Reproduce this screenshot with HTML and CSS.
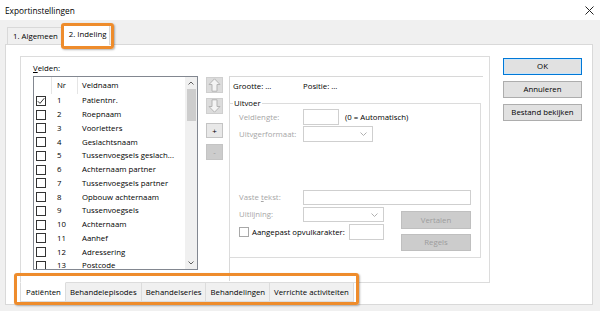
FILE: index.html
```html
<!DOCTYPE html>
<html>

<head>
    <meta charset="utf-8">
    <title>Exportinstellingen</title>
    <link rel="stylesheet" href="styles.css">
</head>

<body>
    <div class="dialog">
        <div class="titlebar">
            <span class="title">Exportinstellingen</span>
            <svg class="close" width="9" height="9" viewBox="0 0 9 9">
                <path d="M0.5 0.5 L8.5 8.5 M8.5 0.5 L0.5 8.5" stroke="#222" stroke-width="1" fill="none" />
            </svg>
        </div>

        <div class="tabstrip">
            <div class="tab">1. Algemeen</div>
            <div class="tab tab-active marked-top">2. Indeling</div>
        </div>

        <div class="page">
            <div class="main">
                <div class="fields">
                    <div class="fields-label"><u>V</u>elden:</div>
                    <div class="fields-row">

                        <div class="listbox">
                            <div class="list-body">
                                <div class="list-head">
                                    <span class="col-check"></span>
                                    <span class="col-nr">Nr</span>
                                    <span class="col-name">Veldnaam</span>
                                </div>
                                <div class="list-row">
                                    <span class="col-check"><span class="check">
                                        <svg width="8" height="8" viewBox="0 0 8 8"><path d="M0.8 4.2 L3 6.4 L7.3 1.2" stroke="#333" stroke-width="1" fill="none" /></svg>
                                    </span></span>
                                    <span class="col-nr">1</span>
                                    <span class="col-name">Patientnr.</span>
                                </div>
                                <div class="list-row"><span class="col-check"><span class="check"></span></span><span class="col-nr">2</span><span class="col-name">Roepnaam</span></div>
                                <div class="list-row"><span class="col-check"><span class="check"></span></span><span class="col-nr">3</span><span class="col-name">Voorletters</span></div>
                                <div class="list-row"><span class="col-check"><span class="check"></span></span><span class="col-nr">4</span><span class="col-name">Geslachtsnaam</span></div>
                                <div class="list-row"><span class="col-check"><span class="check"></span></span><span class="col-nr">5</span><span class="col-name">Tussenvoegsels geslach...</span></div>
                                <div class="list-row"><span class="col-check"><span class="check"></span></span><span class="col-nr">6</span><span class="col-name">Achternaam partner</span></div>
                                <div class="list-row"><span class="col-check"><span class="check"></span></span><span class="col-nr">7</span><span class="col-name">Tussenvoegsels partner</span></div>
                                <div class="list-row"><span class="col-check"><span class="check"></span></span><span class="col-nr">8</span><span class="col-name">Opbouw achternaam</span></div>
                                <div class="list-row"><span class="col-check"><span class="check"></span></span><span class="col-nr">9</span><span class="col-name">Tussenvoegsels</span></div>
                                <div class="list-row"><span class="col-check"><span class="check"></span></span><span class="col-nr">10</span><span class="col-name">Achternaam</span></div>
                                <div class="list-row"><span class="col-check"><span class="check"></span></span><span class="col-nr">11</span><span class="col-name">Aanhef</span></div>
                                <div class="list-row"><span class="col-check"><span class="check"></span></span><span class="col-nr">12</span><span class="col-name">Adressering</span></div>
                                <div class="list-row"><span class="col-check"><span class="check"></span></span><span class="col-nr">13</span><span class="col-name">Postcode</span></div>
                            </div>
                            <div class="scrollbar">
                                <svg class="sb-arrow" width="12" height="12" viewBox="0 0 12 12"><path d="M3.5 7.5 L6 5 L8.5 7.5" stroke="#606060" stroke-width="1" fill="none" /></svg>
                                <div class="sb-thumb"></div>
                                <div class="sb-track"></div>
                                <svg class="sb-arrow" width="12" height="12" viewBox="0 0 12 12"><path d="M3.5 4.5 L6 7 L8.5 4.5" stroke="#606060" stroke-width="1" fill="none" /></svg>
                            </div>
                        </div>

                        <div class="movers">
                            <div class="mover mover-up">
                                <svg width="13" height="14" viewBox="0 0 13 14"><path d="M6.5 0.8 L12 6.5 L9 6.5 L9 13.2 L4 13.2 L4 6.5 L1 6.5 Z" fill="#f4f4f4" stroke="#b4b4b4" stroke-width="1" /></svg>
                            </div>
                            <div class="mover mover-down">
                                <svg width="13" height="14" viewBox="0 0 13 14"><path d="M6.5 13.2 L12 7.5 L9 7.5 L9 0.8 L4 0.8 L4 7.5 L1 7.5 Z" fill="#f4f4f4" stroke="#b4b4b4" stroke-width="1" /></svg>
                            </div>
                            <div class="mover mover-add">+</div>
                            <div class="mover mover-remove">-</div>
                        </div>

                        <div class="props">
                            <div class="props-head">
                                <span class="props-size">Grootte: ...</span>
                                <span>Positie: ...</span>
                            </div>
                            <fieldset class="group">
                                <legend>Uitvoer</legend>
                                <div class="form-row">
                                    <span class="form-label">Veldlengte:</span>
                                    <span class="textbox box-length"></span>
                                    <span class="hint">(0 = Automatisch)</span>
                                </div>
                                <div class="form-row row-format">
                                    <span class="form-label">Uitvgerformaat:</span>
                                    <span class="combo box-format"><svg width="7" height="4" viewBox="0 0 7 4"><path d="M0.5 0.5 L3.5 3.5 L6.5 0.5" stroke="#b0b0b0" fill="none" /></svg></span>
                                </div>

                                <div class="form-row row-text">
                                    <span class="form-label">Vaste <u>t</u>ekst:</span>
                                    <span class="textbox box-text"></span>
                                </div>
                                <div class="lower">
                                    <div class="lower-left">
                                        <div class="form-row row-align">
                                            <span class="form-label">Uitlijning:</span>
                                            <span class="combo box-align"><svg width="7" height="4" viewBox="0 0 7 4"><path d="M0.5 0.5 L3.5 3.5 L6.5 0.5" stroke="#b0b0b0" fill="none" /></svg></span>
                                        </div>
                                        <div class="form-row row-pad">
                                            <span class="check check-light"></span>
                                            <span class="pad-label">Aangepast opvulkarakter:</span>
                                            <span class="textbox box-pad"></span>
                                        </div>
                                    </div>
                                    <div class="lower-buttons">
                                        <div class="btn-off btn-translate">Vertalen</div>
                                        <div class="btn-off btn-rules">Regels</div>
                                    </div>
                                </div>
                            </fieldset>
                        </div>

                    </div>
                </div>

                <div class="subtabs marked-bottom">
                    <div class="subtab subtab-active">Patiënten</div>
                    <div class="subtab">Behandelepisodes</div>
                    <div class="subtab">Behandelseries</div>
                    <div class="subtab">Behandelingen</div>
                    <div class="subtab">Verrichte activiteiten</div>
                </div>
            </div>

            <div class="actions">
                <div class="btn btn-default">OK</div>
                <div class="btn">Annuleren</div>
                <div class="btn">Bestand bekijken</div>
            </div>
        </div>
    </div>
</body>

</html>
```

FILE: styles.css
```css
body {
    margin: 0;
    background-color: #f0f0f0;
    font-family: "Open Sans", "Noto Sans", sans-serif;
    font-size: 7.8px;
    line-height: 11px;
    color: #000;
}

.dialog {
    width: 600px;
    height: 311px;
    display: flex;
    flex-direction: column;
    overflow: hidden;
}

/* title bar */

.titlebar {
    height: 20px;
    flex: none;
    background-color: white;
    display: flex;
    align-items: center;
    justify-content: space-between;
    padding: 0 6px 0 5px;
}

.title {
    font-size: 8.3px;
}

.close {
    margin-top: 1px;
}

/* top tabs */

.tabstrip {
    height: 24px;
    flex: none;
    display: flex;
    align-items: flex-end;
    padding-left: 7px;
}

.tab {
    height: 17px;
    box-sizing: border-box;
    padding: 3px 5px 0 5px;
    border: 1px solid #d9d9d9;
    border-bottom: none;
    background-color: #f0f0f0;
}

.tab-active {
    height: 21px;
    margin-bottom: -1px;
    padding: 4px 3px 0 5px;
    background-color: white;
    border-left: none;
    position: relative;
    z-index: 2;
}

.marked-top::after {
    content: "";
    position: absolute;
    top: -2px;
    right: -5px;
    bottom: -4px;
    left: -3px;
    border: 3px solid #ee8c2c;
    border-radius: 3px;
    box-shadow: 1px 1px 2px rgba(0, 0, 0, 0.3);
}

/* tab page */

.page {
    width: 588px;
    height: 261px;
    margin-left: 5px;
    box-sizing: border-box;
    border: 1px solid #d9d9d9;
    background-color: white;
    display: flex;
    flex: none;
}

.main {
    padding: 11px 0 0 14px;
}

.fields {
    width: 470px;
    height: 227px;
    box-sizing: border-box;
    border: 1px solid #dcdcdc;
}

.fields-label {
    padding: 6px 0 0 12px;
    height: 13px;
}

.fields-row {
    display: flex;
    margin-left: 12px;
    height: 205px;
}

/* list */

.listbox {
    width: 165px;
    height: 194px;
    box-sizing: border-box;
    border: 1px solid #828790;
    display: flex;
    overflow: hidden;
}

.list-body {
    flex: 1;
    overflow: hidden;
}

.list-head {
    height: 17px;
    display: flex;
    align-items: center;
}

.list-head .col-check,
.list-head .col-nr {
    height: 17px;
    border-right: 1px solid #e5e5e5;
}

.list-row {
    height: 13.75px;
    display: flex;
    align-items: center;
    white-space: nowrap;
}

.col-check {
    width: 18px;
    flex: none;
    box-sizing: border-box;
    display: flex;
    align-items: center;
    padding-left: 2px;
}

.col-nr {
    width: 26px;
    flex: none;
    box-sizing: border-box;
    padding-left: 5px;
    display: flex;
    align-items: center;
}

.col-name {
    padding-left: 4px;
    display: flex;
    align-items: center;
}

.check {
    width: 10px;
    height: 10px;
    box-sizing: border-box;
    border: 1px solid #333;
    background-color: white;
    display: flex;
    align-items: center;
    justify-content: center;
    flex: none;
}

.check-light {
    border-color: #a8a8a8;
}

.scrollbar {
    width: 12px;
    flex: none;
    background-color: #f0f0f0;
    display: flex;
    flex-direction: column;
}

.sb-arrow {
    flex: none;
}

.sb-thumb {
    height: 32px;
    margin: 0 1px 0 2px;
    background-color: #cdcdcd;
}

.sb-track {
    flex: 1;
}

/* move buttons */

.movers {
    width: 17px;
    margin-left: 8px;
    display: flex;
    flex-direction: column;
}

.mover {
    box-sizing: border-box;
    border: 1px solid #cfcfcf;
    display: flex;
    align-items: center;
    justify-content: center;
}

.mover-up {
    height: 16px;
    margin-top: 1px;
    background-color: #dcdcdc;
}

.mover-down {
    height: 16px;
    margin-top: 5px;
    background-color: #dcdcdc;
}

.mover-add {
    height: 15px;
    margin-top: 9px;
    background-color: #e8e8e8;
    border-color: #c4c4c4;
    font-size: 8px;
}

.mover-remove {
    height: 16px;
    margin-top: 6px;
    background-color: #cccccc;
    border-color: #c4c4c4;
    color: #9a9a9a;
}

/* properties */

.props {
    width: 254px;
    margin-left: 6px;
    box-sizing: border-box;
    border-left: 1px solid #d8d8d8;
    border-top: 1px solid #d8d8d8;
}

.props-head {
    height: 17px;
    padding: 4px 0 0 3px;
    display: flex;
}

.props-size {
    width: 70px;
}

.group {
    margin: 0 0 0 -1px;
    padding: 0;
    width: 252px;
    height: 160px;
    box-sizing: border-box;
    border: 1px solid #dcdcdc;
}

.group legend {
    padding: 0 1px;
    margin-left: 3px;
    line-height: 11px;
}

.form-row {
    display: flex;
    align-items: center;
    padding-left: 9px;
}

.form-label {
    width: 64px;
    flex: none;
    color: #a6a6a6;
}

.textbox,
.combo {
    box-sizing: border-box;
    border: 1px solid #cfcfcf;
    background-color: white;
    display: flex;
    align-items: center;
    justify-content: flex-end;
    padding-right: 5px;
}

.box-length {
    width: 36px;
    height: 16px;
}

.hint {
    margin-left: 6px;
}

.row-format {
    margin-top: 1px;
}

.box-format {
    width: 70px;
    height: 16px;
}

.row-text {
    margin-top: 48px;
}

.box-text {
    width: 168px;
    height: 15px;
}

.lower {
    display: flex;
}

.lower-left {
    width: 154px;
}

.row-align {
    margin-top: 2px;
}

.box-align {
    width: 81px;
    height: 15px;
}

.row-pad {
    margin-top: 2px;
}

.pad-label {
    margin-left: 3px;
    white-space: nowrap;
}

.box-pad {
    width: 35px;
    height: 16px;
    margin-left: auto;
}

.lower-buttons {
    margin-left: 17px;
    padding-top: 6px;
    width: 70px;
}

.btn-off {
    box-sizing: border-box;
    border: 1px solid #bfbfbf;
    background-color: #cccccc;
    color: #9c9c9c;
    display: flex;
    align-items: center;
    justify-content: center;
}

.btn-translate {
    height: 18px;
}

.btn-rules {
    height: 17px;
    margin-top: 5px;
}

/* bottom tabs */

.subtabs {
    display: flex;
    position: relative;
    margin-top: -1px;
    margin-left: 0;
    width: max-content;
}

.subtab {
    height: 20px;
    box-sizing: border-box;
    padding: 4px 4px 0 4px;
    border: 1px solid #dcdcdc;
    border-left: none;
    background-color: #f0f0f0;
    white-space: nowrap;
}

.subtab-active {
    background-color: white;
    border-top-color: white;
    border-left: 1px solid #dcdcdc;
    padding-left: 5px;
}

.marked-bottom::after {
    content: "";
    position: absolute;
    top: -9px;
    right: -5px;
    bottom: -3px;
    left: -6px;
    border: 3px solid #ee8c2c;
    border-radius: 3px;
    box-shadow: 1px 1px 2px rgba(0, 0, 0, 0.3);
}

/* dialog buttons */

.actions {
    margin: 13px 0 0 13px;
    width: 79px;
    display: flex;
    flex-direction: column;
    gap: 6px;
}

.btn {
    height: 17px;
    box-sizing: border-box;
    border: 1px solid #adadad;
    background-color: #e1e1e1;
    display: flex;
    align-items: center;
    justify-content: center;
    white-space: nowrap;
}

.btn-default {
    border-color: #0078d7;
    box-shadow: inset 0 0 0 1px #cde5f7;
}
```
